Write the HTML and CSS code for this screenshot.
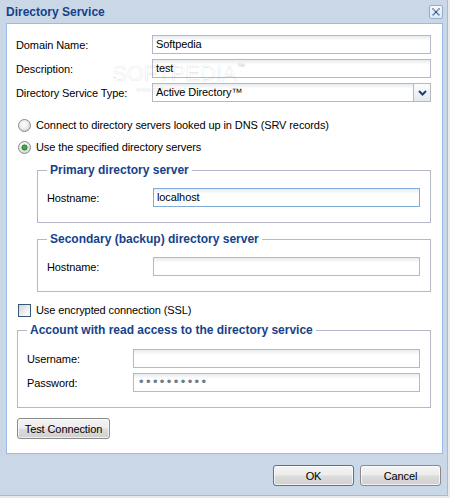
FILE: index.html
```html
<!DOCTYPE html>
<html>
<head>
<meta charset="utf-8">
<title>Directory Service</title>
<link rel="stylesheet" href="styles.css">
</head>
<body>
<div class="window">
  <div class="titlebar">
    <span class="title">Directory Service</span>
    <span class="close">
      <svg width="14" height="14" viewBox="0 0 14 14">
        <defs>
          <linearGradient id="cg" x1="0" y1="0" x2="0" y2="1">
            <stop offset="0" stop-color="#f7f9fc"/>
            <stop offset="1" stop-color="#dfe7f2"/>
          </linearGradient>
        </defs>
        <rect x="0.5" y="0.5" width="13" height="13" rx="1.5" fill="url(#cg)" stroke="#93acd2"/>
        <path d="M3.5 3.5 L10.5 10.5 M10.5 3.5 L3.5 10.5" stroke="#2a4f8f" stroke-width="1.4" stroke-dasharray="1.2 0.5" fill="none"/>
      </svg>
    </span>
  </div>

  <div class="panel">
    <div class="row">
      <span class="lbl top-lbl">Domain Name:</span>
      <span class="input">Softpedia</span>
    </div>
    <div class="row">
      <span class="lbl top-lbl">Description:</span>
      <span class="input">test</span>
    </div>
    <div class="row">
      <span class="lbl top-lbl">Directory Service Type:</span>
      <span class="input select">
        <span class="select-text">Active Directory™</span>
        <span class="trigger">
          <svg width="9" height="6" viewBox="0 0 9 6"><path d="M1 1 L4.5 4.5 L8 1" stroke="#1e3f78" stroke-width="2" fill="none"/></svg>
        </span>
      </span>
    </div>

    <div class="option first">
      <svg class="radio" width="13" height="13" viewBox="0 0 13 13">
        <defs>
          <radialGradient id="rg1" cx="45%" cy="40%" r="60%">
            <stop offset="0" stop-color="#ffffff"/>
            <stop offset="0.6" stop-color="#ececec"/>
            <stop offset="1" stop-color="#cfcfcf"/>
          </radialGradient>
        </defs>
        <circle cx="6.5" cy="6.5" r="6" fill="url(#rg1)" stroke="#8b8b8b"/>
      </svg>
      <span>Connect to directory servers looked up in DNS (SRV records)</span>
    </div>
    <div class="option">
      <svg class="radio" width="13" height="13" viewBox="0 0 13 13">
        <circle cx="6.5" cy="6.5" r="6" fill="url(#rg1)" stroke="#8b8b8b"/>
        <circle cx="6.5" cy="6.5" r="2.6" fill="#3fae45" stroke="#1d6b27" stroke-width="0.9"/>
      </svg>
      <span>Use the specified directory servers</span>
    </div>

    <fieldset class="group sub primary">
      <legend>Primary directory server</legend>
      <div class="row">
        <span class="lbl sub-lbl">Hostname:</span>
        <span class="input focus">localhost</span>
      </div>
    </fieldset>

    <fieldset class="group sub secondary">
      <legend>Secondary (backup) directory server</legend>
      <div class="row">
        <span class="lbl sub-lbl">Hostname:</span>
        <span class="input"></span>
      </div>
    </fieldset>

    <div class="option check-row">
      <span class="check"></span>
      <span>Use encrypted connection (SSL)</span>
    </div>

    <fieldset class="group account">
      <legend>Account with read access to the directory service</legend>
      <div class="row">
        <span class="lbl sub-lbl">Username:</span>
        <span class="input"></span>
      </div>
      <div class="row">
        <span class="lbl sub-lbl">Password:</span>
        <span class="input password">••••••••••</span>
      </div>
    </fieldset>

    <div class="test-row">
      <span class="btn test">Test Connection</span>
    </div>
  </div>

  <div class="footer">
    <span class="btn dlg ok">OK</span>
    <span class="btn dlg">Cancel</span>
  </div>

  <div class="watermark">
    <span class="wm-main">SOFTPEDIA</span><span class="wm-tm">™</span>
    <span class="wm-url">www.softpedia.com</span>
  </div>
</div>
</body>
</html>
```

FILE: styles.css
```css
* {
  box-sizing: border-box;
}

html, body {
  margin: 0;
  padding: 0;
}

body {
  width: 450px;
  height: 498px;
  overflow: hidden;
  background: #e6eaef;
  font-family: "Liberation Sans", Arial, sans-serif;
  font-size: 11px;
  letter-spacing: -0.1px;
  color: #000;
}

.window {
  position: relative;
  width: 448px;
  height: 496px;
  background: #cad7e7;
  border-right: 1px solid #a7bbd5;
  border-bottom: 1px solid #a7bbd5;
  padding: 0 4px 0 6px;
  display: flex;
  flex-direction: column;
}

.titlebar {
  height: 23px;
  flex: none;
  display: flex;
  align-items: center;
  justify-content: space-between;
}

.title {
  font-size: 12px;
  font-weight: bold;
  color: #15428b;
  line-height: 14px;
  letter-spacing: 0;
}

.close {
  display: flex;
  width: 14px;
  height: 14px;
  margin-top: 1px;
}

.panel {
  flex: 1;
  background: #fff;
  border: 1px solid #99bbe8;
  padding: 11px 11px 0 9px;
  display: flex;
  flex-direction: column;
}

.row {
  display: flex;
  align-items: center;
  height: 19px;
  flex: none;
}

.row + .row {
  margin-top: 5px;
}

.lbl {
  flex: none;
  line-height: 14px;
}

.top-lbl {
  width: 136px;
}

.sub-lbl {
  width: 106px;
}

.input {
  flex: 1;
  height: 19px;
  border: 1px solid #b5b8c8;
  background: linear-gradient(#e8ebf0 0, #ffffff 5px);
  padding: 0 3px;
  line-height: 17px;
  white-space: nowrap;
  overflow: hidden;
}

.input.focus {
  border-color: #7eadd9;
}

.select {
  display: flex;
  padding-right: 0;
}

.select-text {
  flex: 1;
}

.trigger {
  width: 17px;
  flex: none;
  border-left: 1px solid #b5b8c8;
  background: linear-gradient(#fbfcfd, #e4e9ef);
  display: flex;
  align-items: center;
  justify-content: center;
}

.password {
  font-size: 13px;
  letter-spacing: 2.4px;
  color: #727a86;
  padding-left: 5px;
  line-height: 16px;
}

.option {
  display: flex;
  align-items: center;
  height: 16px;
  flex: none;
  margin-top: 6px;
}

.option.first {
  margin-top: 15px;
}

.radio {
  flex: none;
  margin-left: 2px;
  margin-right: 5px;
}

.check {
  flex: none;
  width: 13px;
  height: 13px;
  margin-left: 2px;
  margin-right: 5px;
  border: 1px solid #3b5877;
  background: linear-gradient(135deg, #d3d3d3, #f2f2f2 60%, #ffffff);
}

.check-row {
  margin-top: 10px;
}

.group {
  flex: none;
  margin: 0;
  min-width: 0;
  border: 1px solid #b5b8c8;
  padding: 11px 10px 15px 9px;
}

.group legend {
  padding: 0 3px;
  margin: 0;
  font-size: 12px;
  font-weight: bold;
  color: #15428b;
  line-height: 14px;
  letter-spacing: 0;
}

.sub {
  margin-left: 21px;
}

.primary {
  margin-top: 8px;
}

.secondary {
  margin-top: 9px;
}

.account {
  margin-top: 5px;
  margin-left: 1px;
  padding-top: 12px;
}

.test-row {
  display: flex;
  margin-top: 10px;
}

.btn {
  display: flex;
  align-items: center;
  justify-content: center;
  height: 21px;
  border: 1px solid #8a8a8a;
  border-radius: 3px;
  background: linear-gradient(#f4f4f4 0%, #ececec 48%, #dcdcdc 52%, #d0d0d0 100%);
  box-shadow: inset 0 0 0 1px rgba(255,255,255,0.7);
  line-height: 14px;
}

.test {
  width: 93px;
  margin-left: 1px;
}

.footer {
  height: 41px;
  flex: none;
  display: flex;
  justify-content: flex-end;
  align-items: flex-start;
  padding-top: 11px;
  padding-right: 2px;
  gap: 6px;
}

.dlg {
  width: 81px;
}

.ok {
  border-color: #3f78b8;
}

.watermark {
  position: absolute;
  left: 112px;
  top: 62px;
  width: 140px;
  pointer-events: none;
  color: transparent;
  -webkit-text-stroke: 0.6px rgba(0,0,0,0.13);
  letter-spacing: 0;
}

.wm-main {
  font-size: 22px;
  line-height: 24px;
}

.wm-tm {
  font-size: 8px;
  vertical-align: top;
}

.wm-url {
  display: block;
  font-size: 7px;
  line-height: 8px;
  margin-left: 24px;
  -webkit-text-stroke: 0;
  color: rgba(0,0,0,0.12);
}
```
